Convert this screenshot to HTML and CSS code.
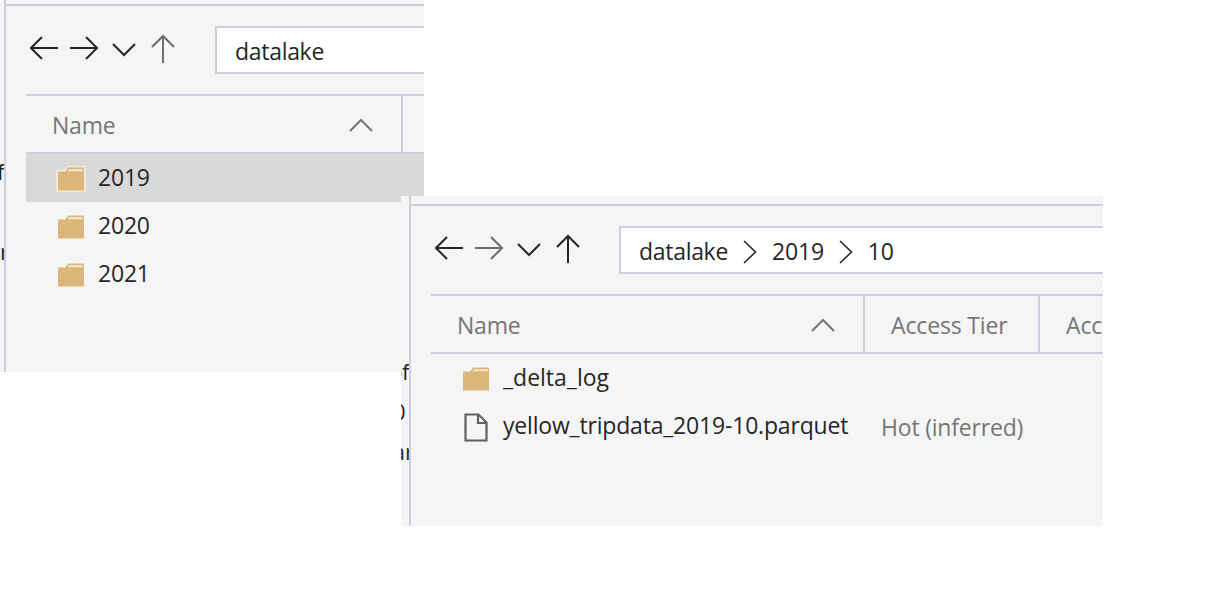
FILE: index.html
```html
<!DOCTYPE html>
<html lang="en">
<head>
<meta charset="utf-8">
<title>datalake</title>
<link rel="stylesheet" href="styles.css">
</head>
<body>
<svg class="defs" width="0" height="0">
  <symbol id="back" viewBox="0 0 40 40"><path d="M12 9L1 20l11 11M1 20H28"/></symbol>
  <symbol id="forward" viewBox="0 0 40 40"><path d="M0 20H27M16 9l11 11-11 11"/></symbol>
  <symbol id="down" viewBox="0 0 40 40"><path d="M3 16l11 11 11-11"/></symbol>
  <symbol id="up" viewBox="0 0 40 40"><path d="M13 35V8M2 19L13 8l11 11"/></symbol>
  <symbol id="sort" viewBox="0 0 24 14"><path d="M1 13L12 2l11 11"/></symbol>
  <symbol id="next" viewBox="0 0 14 24"><path d="M1 1l11.5 11L1 23"/></symbol>
  <symbol id="folder" viewBox="0 0 30 28">
    <path class="tab" d="M9 7l3-4.500H28V8"/>
    <path class="body" d="M2 6.500H28V25.500H2z"/>
    <path class="slot" d="M11.500 6.300L13 4.200H26.800V6.300z"/>
  </symbol>
  <symbol id="halo" viewBox="0 0 30 28"><path class="halo" d="M2 6.500H9l3-4H28V25.500H2z"/></symbol>
  <symbol id="file" viewBox="0 0 30 30"><path d="M4.500 1.500H17.500L25.500 9.500V27.500H4.500zM17 1.500V10H25.500"/></symbol>
</svg>

<section class="window first">
  <div class="gutter"><span class="l1">of</span><span class="l2"></span><span class="l3">ar</span></div>
  <div class="panel">
    <div class="strip"></div>
    <div class="toolbar">
      <svg class="nav"><use href="#back"/></svg>
      <svg class="nav"><use href="#forward"/></svg>
      <svg class="nav"><use href="#down"/></svg>
      <svg class="nav off"><use href="#up"/></svg>
      <div class="address"><span class="crumb">datalake</span></div>
    </div>
    <div class="table">
      <div class="head">
        <div class="cell name"><span class="label-name">Name</span><svg class="sort"><use href="#sort"/></svg></div>
        <div class="cell"></div>
      </div>
      <div class="row selected"><svg class="icon folder"><use href="#halo"/><use href="#folder"/></svg><span class="year">2019</span></div>
      <div class="row"><svg class="icon folder"><use href="#folder"/></svg><span class="year">2020</span></div>
      <div class="row"><svg class="icon folder"><use href="#folder"/></svg><span class="year">2021</span></div>
    </div>
  </div>
</section>

<section class="window second">
  <div class="gutter"><span class="l1">of</span><span class="l2">0</span><span class="l3">ar</span></div>
  <div class="panel">
    <div class="strip"></div>
    <div class="toolbar">
      <svg class="nav"><use href="#back"/></svg>
      <svg class="nav off"><use href="#forward"/></svg>
      <svg class="nav"><use href="#down"/></svg>
      <svg class="nav"><use href="#up"/></svg>
      <div class="address">
        <span class="crumb">datalake</span><svg class="next"><use href="#next"/></svg>
        <span class="year">2019</span><svg class="next"><use href="#next"/></svg>
        <span class="year">10</span>
      </div>
    </div>
    <div class="table">
      <div class="head">
        <div class="cell name"><span class="label-name">Name</span><svg class="sort"><use href="#sort"/></svg></div>
        <div class="cell tier"><span class="label-tier">Access Tier</span></div>
        <div class="cell"><span class="label-tier">Access</span></div>
      </div>
      <div class="row"><svg class="icon folder"><use href="#folder"/></svg><span class="log">_delta_log</span></div>
      <div class="row"><div class="entry"><svg class="icon file"><use href="#file"/></svg><span class="parquet">yellow_tripdata_2019-10.parquet</span></div><span class="hot">Hot (inferred)</span></div>
    </div>
  </div>
</section>
</body>
</html>
```
FILE: styles.css
```css
* { box-sizing: border-box; }
body {
  margin: 0;
  height: 596px;
  position: relative;
  overflow: hidden;
  background: #fff;
  color: #262626;
  font: 23px/30px "Open Sans", "Noto Sans", sans-serif;
  white-space: nowrap;
}
svg { display: block; flex: none; fill: none; stroke: currentColor; stroke-width: 2; }
.defs { position: absolute; }
.window { position: absolute; display: flex; overflow: hidden; background: #f5f5f5; }
.first { left: -4px; top: -4px; width: 428px; height: 376px; }
.second { left: 401px; top: 196px; width: 702px; height: 330px; }

.gutter {
  width: 8px;
  flex: none;
  padding-top: 155px;
  overflow: hidden;
  display: flex;
  flex-direction: column;
  align-items: flex-end;
  font-size: 22px;
  line-height: 40px;
}
.gutter span { height: 40px; }
.l1 { letter-spacing: -0.500px; }
.l2 { margin-right: 3.500px; }
.l3 { margin-right: -5px; }

.panel { flex: 1; min-width: 0; border-left: 2px solid #cdcddb; }
.strip { height: 10px; border-bottom: 2px solid #cdcddb; }
.toolbar { height: 88px; padding: 20px 0 0 24px; display: flex; }
.nav { width: 40px; height: 40px; margin-top: 2px; }
.off { color: #6d6d6d; }
.address {
  flex: 1;
  height: 48px;
  margin-left: 24px;
  padding-left: 18px;
  display: flex;
  align-items: center;
  overflow: hidden;
  background: #fff;
  border: 2px solid #cdcddb;
  border-right: 0;
}
.first .address { margin-left: 25px; }
.address span { position: relative; top: 1px; }
.next { width: 14px; height: 24px; margin: 4px 15px 0 15px; stroke-width: 1.600; }
.crumb { letter-spacing: -0.300px; }
.year { letter-spacing: -0.200px; }

.table { margin-left: 20px; }
.head {
  height: 60px;
  display: flex;
  overflow: hidden;
  color: #757575;
  border: solid #cdcddb;
  border-width: 2px 0;
}
.cell { flex: none; display: flex; align-items: center; padding: 1px 26px 0; }
.cell + .cell { border-left: 2px solid #cdcddb; }
.name { width: 432px; justify-content: space-between; }
.first .name { width: 375px; }
.tier { width: 175px; }
.label-name { letter-spacing: -0.200px; }
.label-tier { letter-spacing: -0.150px; }
.sort { width: 24px; height: 14px; margin-right: 2px; }

.row { height: 48px; padding-bottom: 2px; display: flex; align-items: center; }
.selected { background: #d9d9d9; }
.icon { margin: 4px 12px 0 30px; width: 30px; height: 28px; }
.folder { stroke: none; }
.file { height: 30px; margin-top: 6px; color: #606060; stroke-width: 2.200; }
.halo { stroke: #f2eadd; stroke-width: 3.500; stroke-linejoin: round; fill: #f2eadd; }
.tab, .body { fill: #dcb679; }
.slot { fill: #f3e9d8; }
.entry { width: 434px; display: flex; align-items: center; }
.parquet { letter-spacing: -0.190px; }
.hot { padding: 3px 0 0 16px; color: #757575; letter-spacing: -0.200px; }
```
